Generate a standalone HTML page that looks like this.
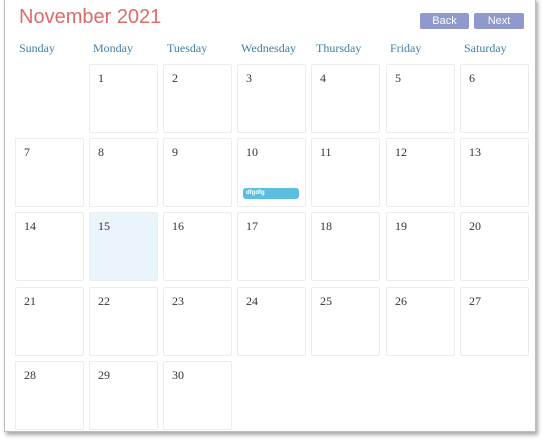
<!DOCTYPE html>
<html><head><style>
html,body{margin:0;padding:0;width:542px;height:442px;overflow:hidden;background:#fff;font-family:"Liberation Serif",serif;}
.frame{position:absolute;left:4px;top:-2px;width:530px;height:432px;border:1px solid #bdbdbd;box-shadow:2px 3px 4px rgba(0,0,0,.35);background:#fff;}
.title{position:absolute;left:19px;top:7px;font:20px "Liberation Sans",sans-serif;color:#e06a6a;line-height:20px;}
.btn{position:absolute;top:13px;height:16px;background:#8f99cc;color:#fff;font:11px "Liberation Sans",sans-serif;text-align:center;line-height:16px;border-radius:2px;}
.dn{position:absolute;top:41px;font-size:12px;color:#3d80a8;}
.c{position:absolute;width:67px;height:67px;border:1px solid #ececec;border-radius:2px;background:#fff;font-size:12px;color:#333;}
.c span{position:absolute;left:8px;top:6px;}
.today{background:#eaf4fb;}
.ev{position:absolute;left:5px;top:49px;width:56px;height:11px;background:#5bbde0;border-radius:3px;color:#fff;font:bold 6px "Liberation Sans",sans-serif;line-height:11px;padding-left:3px;box-sizing:border-box;}
</style></head><body>
<div class="frame"></div>
<div class="title">November 2021</div>
<div class="btn" style="left:420px;width:49px">Back</div>
<div class="btn" style="left:474px;width:50px">Next</div>
<div class="dn" style="left:19px">Sunday</div>
<div class="dn" style="left:93px">Monday</div>
<div class="dn" style="left:167px">Tuesday</div>
<div class="dn" style="left:241px">Wednesday</div>
<div class="dn" style="left:316px">Thursday</div>
<div class="dn" style="left:390px">Friday</div>
<div class="dn" style="left:464px">Saturday</div>
<div id="g"></div>
<script>
var xs=[15,89,163,237,311,386,460],ys=[64,138,212,287,361],h='';
for(var d=1;d<=30;d++){var i=d;var r=Math.floor(i/7),col=i%7;
h+='<div class="c'+(d==15?' today':'')+'" style="left:'+xs[col]+'px;top:'+ys[r]+'px"><span>'+d+'</span>'+(d==10?'<div class="ev">dfgdfg</div>':'')+'</div>';}
document.getElementById('g').innerHTML=h;
</script>
</body></html>
